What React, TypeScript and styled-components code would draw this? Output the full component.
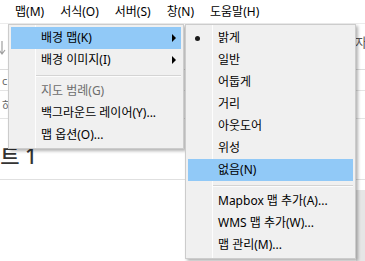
import styled, { createGlobalStyle } from 'styled-components';

const GlobalStyle = createGlobalStyle`
  html, body { margin: 0; padding: 0; background: #fff; }
  body {
    font-family: "Noto Sans", "Noto Sans CJK KR", sans-serif;
    font-size: 12px;
    color: #000;
  }
`;

type Item =
  | { sep: true }
  | {
      sep?: false;
      label: string;
      sub?: boolean;
      active?: boolean;
      disabled?: boolean;
      checked?: boolean;
    };

const mapMenu: Item[] = [
  { label: '배경 맵(K)', sub: true, active: true },
  { label: '배경 이미지(I)', sub: true },
  { sep: true },
  { label: '지도 범례(G)', disabled: true },
  { label: '백그라운드 레이어(Y)...' },
  { label: '맵 옵션(O)...' },
];

const baseMapMenu: Item[] = [
  { label: '밝게', checked: true },
  { label: '일반' },
  { label: '어둡게' },
  { label: '거리' },
  { label: '아웃도어' },
  { label: '위성' },
  { label: '없음(N)', active: true },
  { sep: true },
  { label: 'Mapbox 맵 추가(A)...' },
  { label: 'WMS 맵 추가(W)...' },
  { label: '맵 관리(M)...' },
];

const topMenus = ['맵(M)', '서식(O)', '서버(S)', '창(N)', '도움말(H)'];

function Menu({ items, left, width }: { items: Item[]; left: number; width: number }) {
  return (
    <Popup $left={left} $width={width}>
      {items.map((item, i) =>
        item.sep ? (
          <Separator key={i} />
        ) : (
          <Row key={i} $active={item.active} $disabled={item.disabled}>
            <IconCell>{item.checked && <Bullet />}</IconCell>
            <Label>{item.label}</Label>
            <ArrowCell>{item.sub && <Arrow />}</ArrowCell>
          </Row>
        )
      )}
    </Popup>
  );
}

export default function App() {
  return (
    <Page>
      <GlobalStyle />
      <MenuBar>
        {topMenus.map((m) => (
          <MenuBarItem key={m}>{m}</MenuBarItem>
        ))}
      </MenuBar>
      <Toolbar>
        <ToolIcon width='8' height='16' viewBox='0 0 8 16'>
          <path d='M2 1v12M-1 10l3 4 3-4' stroke='#a0a0a0' strokeWidth='1.2' fill='none' />
        </ToolIcon>
        <ToolText>자료</ToolText>
      </Toolbar>
      <GridRow $height={20}>
        <CellText>c</CellText>
      </GridRow>
      <GridRow $height={27}>
        <CellText>하</CellText>
      </GridRow>
      <SheetHeader>
        <SheetTitle>시트 1</SheetTitle>
      </SheetHeader>
      <Canvas>
        <MapStrip />
      </Canvas>
      <Menu items={mapMenu} left={8} width={176} />
      <Menu items={baseMapMenu} left={185} width={171} />
    </Page>
  );
}

const Page = styled.div`
  position: relative;
  width: 365px;
  height: 261px;
  overflow: hidden;
  background: #fff;
  display: flex;
  flex-direction: column;
`;

const MenuBar = styled.div`
  display: flex;
  align-items: center;
  height: 23px;
  padding-left: 7px;
  border-bottom: 1px solid #ececec;
  flex: none;
`;

const MenuBarItem = styled.div`
  padding: 0 8px;
  line-height: 23px;
  white-space: nowrap;
`;

const Toolbar = styled.div`
  display: flex;
  align-items: flex-start;
  height: 45px;
  border-bottom: 1px solid #dcdcdc;
  flex: none;
  overflow: hidden;
`;

const ToolIcon = styled.svg`
  margin-top: 16px;
`;

const ToolText = styled.span`
  margin-left: auto;
  margin-right: -14px;
  margin-top: 8px;
  color: #555;
  font-size: 13px;
`;

const GridRow = styled.div<{ $height: number }>`
  height: ${(p) => p.$height}px;
  border-bottom: 1px solid #e4e4e4;
  display: flex;
  align-items: center;
  flex: none;
  overflow: hidden;
`;

const CellText = styled.span`
  margin-left: 2px;
  color: #666;
  font-size: 11px;
`;

const SheetHeader = styled.div`
  height: 60px;
  border-bottom: 1px solid #e0e0e0;
  display: flex;
  align-items: flex-end;
  flex: none;
  overflow: hidden;
`;

const SheetTitle = styled.span`
  margin-left: -19px;
  margin-bottom: 9px;
  font-size: 21px;
  font-weight: 500;
  color: #333;
  white-space: nowrap;
`;

const Canvas = styled.div`
  flex: 1;
  display: flex;
  justify-content: flex-end;
  padding-top: 10px;
`;

const MapStrip = styled.div`
  width: 9px;
  background: #e6e6e6;
`;

const Popup = styled.div<{ $left: number; $width: number }>`
  position: absolute;
  top: 24px;
  left: ${(p) => p.$left}px;
  width: ${(p) => p.$width}px;
  box-sizing: border-box;
  padding: 2px;
  background: #f0f0f0;
  border: 1px solid #cccccc;
  box-shadow: 2px 2px 3px rgba(0, 0, 0, 0.3);
  &::before {
    content: '';
    position: absolute;
    top: 0;
    bottom: 0;
    left: 26px;
    width: 1px;
    background: #fdfdfd;
  }
`;

const Row = styled.div<{ $active?: boolean; $disabled?: boolean }>`
  position: relative;
  z-index: 1;
  display: flex;
  align-items: center;
  height: 22px;
  background: ${(p) => (p.$active ? '#91c9f7' : 'transparent')};
  color: ${(p) => (p.$disabled ? '#6d6d6d' : '#000')};
  white-space: nowrap;
`;

const IconCell = styled.div`
  width: 18px;
  display: flex;
  justify-content: center;
  align-items: center;
  flex: none;
`;

const Bullet = styled.span`
  width: 5px;
  height: 5px;
  border-radius: 50%;
  background: #1a1a1a;
`;

const Label = styled.span`
  flex: 1;
  padding-left: 12px;
  line-height: 22px;
`;

const ArrowCell = styled.div`
  width: 14px;
  display: flex;
  justify-content: center;
  flex: none;
`;

const Arrow = styled.span`
  width: 0;
  height: 0;
  border-top: 4px solid transparent;
  border-bottom: 4px solid transparent;
  border-left: 4px solid #000;
`;

const Separator = styled.div`
  height: 9px;
  margin-left: 25px;
  display: flex;
  flex-direction: column;
  justify-content: center;
  &::before {
    content: '';
    height: 1px;
    background: #d4d4d4;
  }
  &::after {
    content: '';
    height: 1px;
    background: #fcfcfc;
  }
`;
